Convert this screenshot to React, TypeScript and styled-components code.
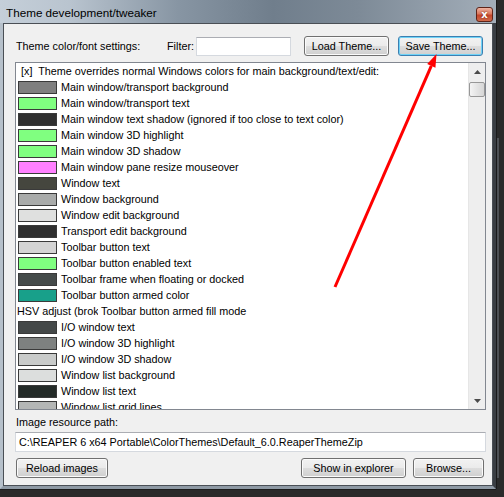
import React from "react";
import styled, { createGlobalStyle, css } from "styled-components";

const Global = createGlobalStyle`
  html, body { margin: 0; padding: 0; background: #262626; }
  body { font-family: "Liberation Sans", Arial, sans-serif; }
`;

const Page = styled.div`
  position: relative;
  width: 504px;
  height: 497px;
  overflow: hidden;
  background: #2a2a2a;
  display: flex;
  align-items: flex-start;
`;

const DesktopStrip = styled.div`
  width: 2px;
  height: 340px;
  margin: 138px 0 0 1px;
  background: #4e5155;
  flex: none;
`;

const Window = styled.div`
  width: 496px;
  height: 489px;
  flex: none;
  display: flex;
  flex-direction: column;
  background: linear-gradient(to right, #c5cfd9 0%, #b9c4cf 14%, #8795a3 36%, #707e8c 55%, #7d8a97 72%, #a3aeb9 100%);
  box-shadow: 1px 0 0 #1a1a1a, 0 1px 0 #1a1a1a;
`;

const TitleBar = styled.div`
  height: 23px;
  flex: none;
  display: flex;
  align-items: flex-start;
  padding: 0 3px 0 6px;
  box-sizing: border-box;
  font-size: 11.7px;
  line-height: 25px;
  color: #000;
`;

const CloseButton = styled.div`
  margin-left: auto;
  margin-top: 7px;
  width: 17px;
  height: 15px;
  box-sizing: border-box;
  border: 1px solid #5e2418;
  border-radius: 3px;
  background: linear-gradient(#efb3a1 0%, #d9775c 45%, #c4452a 55%, #d06a4a 100%);
  color: #fff;
  font: bold 10px/1 "DejaVu Sans", sans-serif;
  display: flex;
  align-items: center;
  justify-content: center;
  text-shadow: 0 0 2px #6a1a0c;
`;

const FrameBody = styled.div`
  flex: 1;
  display: flex;
  border-left: 3px solid #b6c0ca;
  border-right: 3px solid #3a3e43;
  border-bottom: 3px solid #8e99a4;
`;

const Client = styled.div`
  flex: 1;
  border: 1px solid #4a4f55;
  background: #f0f0f0;
  padding: 12px 6px 7px 11px;
  display: flex;
  flex-direction: column;
  font-size: 10.8px;
  color: #000;
`;

const ToolRow = styled.div`
  display: flex;
  align-items: center;
  height: 20px;
  margin: 0 2px 0 1px;
`;

const FieldLabel = styled.span<{ $w?: number }>`
  ${(p) => p.$w && css`width: ${p.$w}px;`}
  flex: none;
  white-space: nowrap;
`;

const TextBox = styled.div<{ $w?: number }>`
  box-sizing: border-box;
  height: 19px;
  ${(p) => (p.$w ? css`width: ${p.$w}px;` : css`flex: 1;`)}
  background: #fff;
  border: 1px solid #d5d9df;
  border-top-color: #abadb3;
  display: flex;
  align-items: center;
  padding-left: 2px;
  white-space: nowrap;
  overflow: hidden;
`;

const Button = styled.div<{ $w: number; $default?: boolean }>`
  box-sizing: border-box;
  width: ${(p) => p.$w}px;
  height: 20px;
  flex: none;
  border: 1px solid #707070;
  border-radius: 3px;
  background: linear-gradient(#f2f2f2 0%, #ebebeb 48%, #dddddd 52%, #cfcfcf 100%);
  box-shadow: inset 0 0 0 1px #fbfbfb;
  display: flex;
  align-items: center;
  justify-content: center;
  white-space: nowrap;
  ${(p) =>
    p.$default &&
    css`
      border-color: #3c7fb1;
      box-shadow: inset 0 0 0 1px #6fd3f7;
    `}
`;

const Spacer = styled.div<{ $w?: number }>`
  ${(p) => (p.$w !== undefined ? css`width: ${p.$w}px; flex: none;` : css`flex: 1;`)}
`;

const ListBox = styled.div`
  margin-top: 6px;
  height: 348px;
  box-sizing: border-box;
  border: 1px solid #828790;
  background: #fff;
  display: flex;
`;

const Rows = styled.div`
  flex: 1;
  overflow: hidden;
`;

const Row = styled.div`
  height: 16px;
  display: flex;
  align-items: center;
  white-space: nowrap;
`;

const HeaderText = styled.span`
  margin-left: 5px;
`;

const Swatch = styled.div<{ $c: string }>`
  box-sizing: border-box;
  width: 39px;
  height: 13px;
  margin-left: 2px;
  border: 1px solid #3a3a3a;
  background: ${(p) => p.$c};
  flex: none;
`;

const Clipped = styled.span`
  width: 81px;
  margin-left: 1px;
  overflow: hidden;
  flex: none;
`;

const RowText = styled.span<{ $gap?: number }>`
  margin-left: ${(p) => p.$gap ?? 4}px;
`;

const ScrollBar = styled.div`
  width: 17px;
  display: flex;
  flex-direction: column;
  background: #eeeeee;
  border-left: 1px solid #e6e6e6;
  box-sizing: border-box;
`;

const ArrowBox = styled.div`
  height: 17px;
  display: flex;
  align-items: center;
  justify-content: center;
  flex: none;
`;

const Thumb = styled.div`
  margin: 2px 0 0 0;
  height: 15px;
  box-sizing: border-box;
  border: 1px solid #979797;
  border-radius: 2px;
  background: linear-gradient(to right, #f4f4f4, #e4e4e4 50%, #d6d6d6);
  flex: none;
`;

const Track = styled.div`
  flex: 1;
`;

const PathLabel = styled.div`
  margin: 4px 0 0 1px;
  height: 16px;
  line-height: 16px;
`;

const PathBox = styled(TextBox)`
  margin-top: 2px;
  height: 20px;
  flex: none;
  padding-left: 3px;
`;

const BottomRow = styled(ToolRow)`
  margin-top: 6px;
`;

const Overlay = styled.svg`
  position: absolute;
  left: 0;
  top: 0;
  pointer-events: none;
`;

type Item = { c?: string; label: string; hsv?: string };

const items: Item[] = [
  { c: "#7f7f7f", label: "Main window/transport background" },
  { c: "#80ff80", label: "Main window/transport text" },
  { c: "#303030", label: "Main window text shadow (ignored if too close to text color)" },
  { c: "#80ff80", label: "Main window 3D highlight" },
  { c: "#80ff80", label: "Main window 3D shadow" },
  { c: "#ff80ff", label: "Main window pane resize mouseover" },
  { c: "#45463e", label: "Window text" },
  { c: "#a9abaa", label: "Window background" },
  { c: "#dfe0df", label: "Window edit background" },
  { c: "#2f2f2f", label: "Transport edit background" },
  { c: "#d4d4d4", label: "Toolbar button text" },
  { c: "#80ff80", label: "Toolbar button enabled text" },
  { c: "#454b4a", label: "Toolbar frame when floating or docked" },
  { c: "#18a08a", label: "Toolbar button armed color" },
  { hsv: "HSV adjust (broken)", label: "Toolbar button armed fill mode" },
  { c: "#444848", label: "I/O window text" },
  { c: "#7e8180", label: "I/O window 3D highlight" },
  { c: "#c9cbca", label: "I/O window 3D shadow" },
  { c: "#dcdedd", label: "Window list background" },
  { c: "#242b28", label: "Window list text" },
  { c: "#b4b6b5", label: "Window list grid lines" },
];

const Tri = ({ down }: { down?: boolean }) => (
  <svg width="7" height="4" viewBox="0 0 7 4">
    <path d={down ? "M0 0 L7 0 L3.5 4 Z" : "M0 4 L7 4 L3.5 0 Z"} fill="#4a4a4a" />
  </svg>
);

export default function App() {
  const tip = { x: 436.5, y: 54 };
  const tail = { x: 335, y: 287 };
  const dx = tip.x - tail.x;
  const dy = tip.y - tail.y;
  const len = Math.hypot(dx, dy);
  const ux = dx / len;
  const uy = dy / len;
  const hl = 13;
  const hw = 4.5;
  const bx = tip.x - ux * hl;
  const by = tip.y - uy * hl;
  const head = `${tip.x},${tip.y} ${bx - uy * hw},${by + ux * hw} ${bx + uy * hw},${by - ux * hw}`;

  return (
    <>
      <Global />
      <Page>
        <Window>
          <TitleBar>
            Theme development/tweaker
            <CloseButton>x</CloseButton>
          </TitleBar>
          <FrameBody>
            <Client>
              <ToolRow>
                <FieldLabel $w={151}>Theme color/font settings:</FieldLabel>
                <FieldLabel $w={29}>Filter:</FieldLabel>
                <TextBox $w={95} />
                <Spacer $w={13} />
                <Button $w={85}>Load Theme...</Button>
                <Spacer $w={9} />
                <Button $w={85} $default>
                  Save Theme...
                </Button>
              </ToolRow>
              <ListBox>
                <Rows>
                  <Row>
                    <HeaderText>[x]&nbsp; Theme overrides normal Windows colors for main background/text/edit:</HeaderText>
                  </Row>
                  {items.map((it, i) => (
                    <Row key={i}>
                      {it.hsv ? (
                        <>
                          <Clipped>{it.hsv}</Clipped>
                          <RowText $gap={3}>{it.label}</RowText>
                        </>
                      ) : (
                        <>
                          <Swatch $c={it.c!} />
                          <RowText>{it.label}</RowText>
                        </>
                      )}
                    </Row>
                  ))}
                </Rows>
                <ScrollBar>
                  <ArrowBox>
                    <Tri />
                  </ArrowBox>
                  <Thumb />
                  <Track />
                  <ArrowBox>
                    <Tri down />
                  </ArrowBox>
                </ScrollBar>
              </ListBox>
              <PathLabel>Image resource path:</PathLabel>
              <PathBox>C:\REAPER 6 x64 Portable\ColorThemes\Default_6.0.ReaperThemeZip</PathBox>
              <BottomRow>
                <Button $w={92}>Reload images</Button>
                <Spacer />
                <Button $w={105}>Show in explorer</Button>
                <Spacer $w={7} />
                <Button $w={71}>Browse...</Button>
              </BottomRow>
            </Client>
          </FrameBody>
        </Window>
        <DesktopStrip />
        <Overlay width={504} height={497}>
          <line x1={tail.x} y1={tail.y} x2={bx} y2={by} stroke="#ff0000" strokeWidth={3} />
          <polygon points={head} fill="#ff0000" />
        </Overlay>
      </Page>
    </>
  );
}
